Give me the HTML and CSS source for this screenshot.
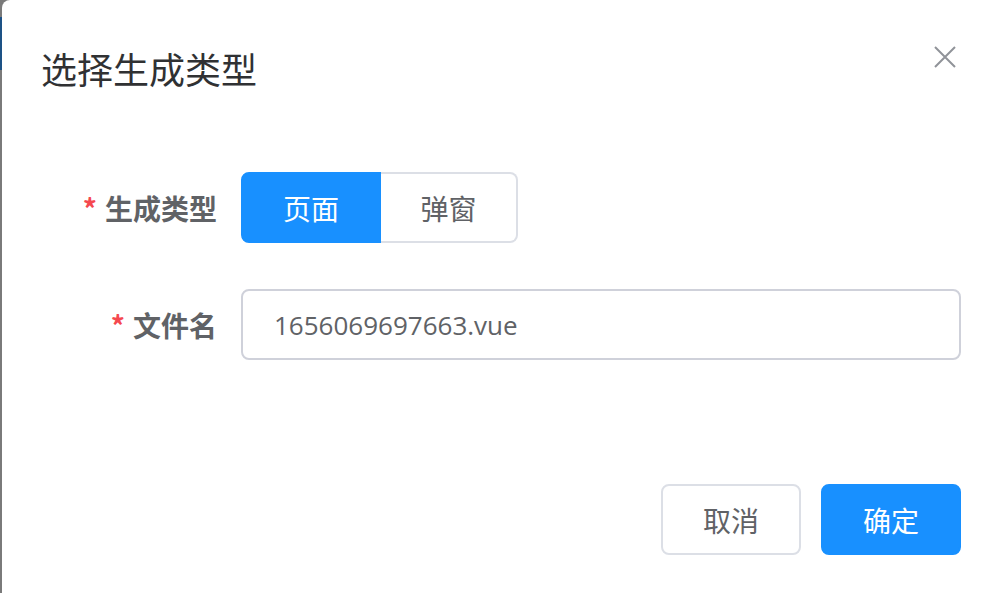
FILE: index.html
```html
<!DOCTYPE html>
<html lang="zh-CN">
<head>
    <meta charset="UTF-8">
    <meta name="viewport" content="width=device-width, initial-scale=1.0">
    <title>选择生成类型</title>
    <link rel="stylesheet" href="styles.css">
</head>
<body>
    <div class="mask-edge"></div>
    <div class="dialog">
        <div class="dialog-header">
            <span class="dialog-title">选择生成类型</span>
            <button type="button" class="dialog-close" aria-label="Close">
                <svg width="22" height="22" viewBox="0 0 22 22">
                    <path d="M1 1 L21 21 M21 1 L1 21" stroke="#909399" stroke-width="2" fill="none"/>
                </svg>
            </button>
        </div>

        <form class="dialog-body" id="genForm">
            <div class="form-item">
                <label class="form-label"><span class="required">*</span>生成类型</label>
                <div class="form-content">
                    <div class="radio-group">
                        <button type="button" class="radio-btn active">页面</button>
                        <button type="button" class="radio-btn">弹窗</button>
                    </div>
                </div>
            </div>
            <div class="form-item">
                <label class="form-label" for="fileName"><span class="required">*</span>文件名</label>
                <div class="form-content">
                    <input type="text" id="fileName" class="text-input" value="1656069697663.vue">
                </div>
            </div>
        </form>

        <div class="dialog-footer">
            <button type="button" class="btn">取消</button>
            <button type="button" class="btn btn-primary">确定</button>
        </div>
    </div>
</body>
</html>
```

FILE: styles.css
```css
html, body {
    margin: 0;
    height: 100%;
    overflow: hidden;
}
body {
    background-color: #7a7a7a;
    font-family: "Noto Sans CJK SC", "Noto Sans", sans-serif;
    position: relative;
}
.mask-edge {
    position: absolute;
    left: 0;
    top: 17px;
    width: 2px;
    height: 53px;
    background-color: #1d5286;
}
.dialog {
    margin-left: 2px;
    width: 996px;
    height: 100%;
    background-color: #fff;
    border-radius: 8px 0 0 0;
    overflow: hidden;
}
.dialog-header {
    display: flex;
    align-items: center;
    justify-content: space-between;
    padding: 40px 0 0 39px;
    height: 56px;
    width: 920px;
}
.dialog-title {
    font-size: 36px;
    line-height: 56px;
    color: #303133;
}
.dialog-close {
    border: none;
    background: none;
    padding: 0;
    margin-right: 5px;
    margin-top: -22px;
    cursor: pointer;
    display: flex;
}
.dialog-body {
    padding: 76px 0 0 0;
    margin: 0;
}
.form-item {
    display: flex;
    align-items: center;
    margin-bottom: 46px;
}
.form-label {
    width: 239px;
    padding-right: 24px;
    box-sizing: border-box;
    text-align: right;
    font-size: 28px;
    font-weight: bold;
    color: #606266;
}
.required {
    color: #f5484f;
    margin-right: 8px;
}
.form-content {
    flex: none;
}
.radio-group {
    display: flex;
}
.radio-btn {
    height: 71px;
    border: 2px solid #dcdfe6;
    background-color: #fff;
    color: #606266;
    font-family: inherit;
    font-size: 28px;
    padding: 0;
    width: 137px;
    cursor: pointer;
}
.radio-btn:first-child {
    width: 140px;
    border-radius: 8px 0 0 8px;
}
.radio-btn:last-child {
    border-left: none;
    border-radius: 0 8px 8px 0;
}
.radio-btn.active {
    background-color: #1890ff;
    border-color: #1890ff;
    color: #fff;
}
.text-input {
    width: 720px;
    height: 71px;
    box-sizing: border-box;
    border: 2px solid #cfd1da;
    border-radius: 8px;
    padding: 0 31px;
    font-family: "Open Sans", sans-serif;
    font-size: 26px;
    color: #606266;
    outline: none;
}
.dialog-footer {
    display: flex;
    justify-content: flex-end;
    gap: 20px;
    width: 959px;
    padding-top: 78px;
}
.btn {
    width: 140px;
    height: 71px;
    border: 2px solid #dcdfe6;
    border-radius: 8px;
    background-color: #fff;
    color: #606266;
    font-family: inherit;
    font-size: 28px;
    cursor: pointer;
}
.btn-primary {
    background-color: #1890ff;
    border-color: #1890ff;
    color: #fff;
}
```
